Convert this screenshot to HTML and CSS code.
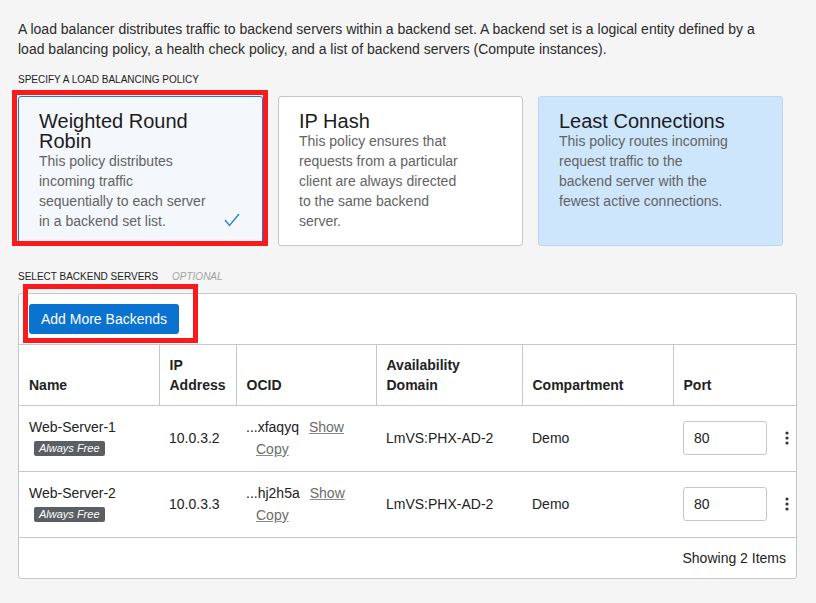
FILE: index.html
```html
<!DOCTYPE html>
<html>
<head>
<meta charset="utf-8">
<link rel="stylesheet" href="styles.css">
</head>
<body>
<div class="page">
  <p class="intro">A load balancer distributes traffic to backend servers within a backend set. A backend set is a logical entity defined by a<br>load balancing policy, a health check policy, and a list of backend servers (Compute instances).</p>

  <div class="label label-policy">Specify a load balancing policy</div>
  <div class="policies">
    <div class="policy selected">
      <div class="policy-title">Weighted Round<br>Robin</div>
      <div class="policy-desc">This policy distributes<br>incoming traffic<br>sequentially to each server<br>in a backend set list.</div>
      <svg class="check" width="16" height="14" viewBox="0 0 16 14"><polyline points="1,7 5.5,12.5 15,1" fill="none" stroke="#2d7fdc" stroke-width="1.4"/></svg>
    </div>
    <div class="policy">
      <div class="policy-title">IP Hash</div>
      <div class="policy-desc">This policy ensures that<br>requests from a particular<br>client are always directed<br>to the same backend<br>server.</div>
    </div>
    <div class="policy hovered">
      <div class="policy-title">Least Connections</div>
      <div class="policy-desc">This policy routes incoming<br>request traffic to the<br>backend server with the<br>fewest active connections.</div>
    </div>
    <div class="annot annot-policy"></div>
  </div>

  <div class="label label-backends">Select backend servers <span class="optional">Optional</span></div>
  <div class="panel">
    <div class="toolbar"><button class="btn">Add More Backends</button></div>
    <table class="grid">
      <colgroup>
        <col class="c-name"><col class="c-ip"><col class="c-ocid"><col class="c-ad"><col class="c-comp"><col class="c-port">
      </colgroup>
      <thead>
        <tr>
          <th>Name</th>
          <th>IP<br>Address</th>
          <th>OCID</th>
          <th>Availability<br>Domain</th>
          <th>Compartment</th>
          <th>Port</th>
        </tr>
      </thead>
      <tbody>
        <tr>
          <td><div class="srv">Web-Server-1</div><div class="badge">Always Free</div></td>
          <td>10.0.3.2</td>
          <td class="ocid"><span>...xfaqyq</span><a class="lnk">Show</a><a class="lnk">Copy</a></td>
          <td>LmVS:PHX-AD-2</td>
          <td>Demo</td>
          <td class="port-cell"><div class="port"><input class="port-input" value="80"><svg class="kebab" width="4" height="14" viewBox="0 0 4 14"><circle cx="2" cy="2" r="1.6" fill="#333"/><circle cx="2" cy="7" r="1.6" fill="#333"/><circle cx="2" cy="12" r="1.6" fill="#333"/></svg></div></td>
        </tr>
        <tr>
          <td><div class="srv">Web-Server-2</div><div class="badge">Always Free</div></td>
          <td>10.0.3.3</td>
          <td class="ocid"><span>...hj2h5a</span><a class="lnk">Show</a><a class="lnk">Copy</a></td>
          <td>LmVS:PHX-AD-2</td>
          <td>Demo</td>
          <td class="port-cell"><div class="port"><input class="port-input" value="80"><svg class="kebab" width="4" height="14" viewBox="0 0 4 14"><circle cx="2" cy="2" r="1.6" fill="#333"/><circle cx="2" cy="7" r="1.6" fill="#333"/><circle cx="2" cy="12" r="1.6" fill="#333"/></svg></div></td>
        </tr>
      </tbody>
    </table>
    <div class="footer">Showing 2 Items</div>
    <div class="annot annot-btn"></div>
  </div>
</div>
</body>
</html>
```

FILE: styles.css
```css
* { box-sizing: border-box; }
html, body { margin: 0; padding: 0; }
body {
  background: #f5f5f5;
  font-family: "Liberation Sans", Arial, Helvetica, sans-serif;
  color: #2b2b2b;
  font-size: 14px;
}
.page {
  padding: 0 19px 0 18px;
}
.intro {
  margin: 19px 0 0;
  line-height: 20px;
  font-size: 14px;
  color: #2b2b2b;
  white-space: nowrap;
}
.label {
  font-size: 10px;
  line-height: 14px;
  text-transform: uppercase;
  color: #222;
}
.label-policy { margin-top: 14px; margin-bottom: 9px; }
.label-backends { margin-top: 24px; margin-bottom: 9px; }
.optional {
  font-style: italic;
  color: #a3a3a3;
  margin-left: 11px;
}
.policies {
  position: relative;
  display: flex;
  gap: 15px;
}
.policy {
  position: relative;
  width: 245px;
  height: 150px;
  border: 1px solid #c2c5ca;
  border-radius: 3px;
  background: #fff;
  padding: 14px 20px;
}
.policy.selected {
  background: #f4f7fc;
  border-color: #1a7ad4;
}
.policy.hovered {
  background: #cde6fc;
  border-color: #b7d9f7;
}
.policy-title {
  font-size: 20px;
  line-height: 20px;
  color: #1c1c1c;
}
.policy-desc {
  font-size: 14px;
  line-height: 20px;
  color: #636363;
}
.check {
  position: absolute;
  right: 22px;
  bottom: 18px;
}
.annot {
  position: absolute;
  border: 5px solid #f91b1b;
  pointer-events: none;
}
.annot-policy {
  left: -6px;
  top: -6px;
  width: 256px;
  height: 156px;
}
.annot-btn {
  left: 4px;
  top: -10px;
  width: 175px;
  height: 59px;
}
.panel {
  position: relative;
  background: #fff;
  border: 1px solid #c4c6ca;
  border-radius: 3px;
}
.toolbar {
  padding: 10px;
  height: 51px;
  border-bottom: 1px solid #c4c6ca;
}
.btn {
  display: block;
  height: 30px;
  width: 150px;
  padding: 0;
  border: none;
  border-radius: 3px;
  background: #0a72cf;
  color: #fff;
  font-family: "Liberation Sans", Arial, sans-serif;
  font-size: 14px;
}
.grid {
  width: 100%;
  table-layout: fixed;
  border-collapse: collapse;
}
.c-name { width: 140px; }
.c-ip { width: 77px; }
.c-ocid { width: 140px; }
.c-ad { width: 146px; }
.c-comp { width: 151px; }
.c-port { width: auto; }
.grid th {
  text-align: left;
  vertical-align: bottom;
  font-weight: bold;
  font-size: 14px;
  line-height: 20px;
  color: #222;
  padding: 10px;
  height: 60px;
  border-bottom: 1px solid #c4c6ca;
  border-right: 1px solid #c4c6ca;
}
.grid th:last-child { border-right: none; }
.grid td {
  vertical-align: middle;
  padding: 10px 10px 11px 10px;
  line-height: 22px;
  height: 64px;
  border-bottom: 1px solid #c4c6ca;
  color: #222;
}
.grid td.port-cell { padding-right: 4px; }
.srv { line-height: 22px; }
.badge {
  display: inline-block;
  margin: 3px 0 4px 5px;
  height: 15px;
  line-height: 15px;
  padding: 0 5px;
  font-size: 11px;
  font-style: italic;
  color: #fff;
  background: #5b5f63;
  border-radius: 2px;
  vertical-align: top;
}
.lnk {
  display: inline-block;
  margin-left: 10px;
  color: #6b6b6b;
  text-decoration: underline;
  text-decoration-color: #8a8a8a;
}
.port {
  display: flex;
  align-items: center;
  gap: 18px;
}
.port-input {
  flex: none;
  width: 84px;
  height: 34px;
  border: 1px solid #c4c6ca;
  border-radius: 3px;
  padding: 0 10px;
  font-family: "Liberation Sans", Arial, sans-serif;
  font-size: 14px;
  color: #222;
  background: #fff;
}
.kebab { flex: none; }
.footer {
  height: 40px;
  line-height: 40px;
  text-align: right;
  padding-right: 10px;
  color: #222;
}
```
